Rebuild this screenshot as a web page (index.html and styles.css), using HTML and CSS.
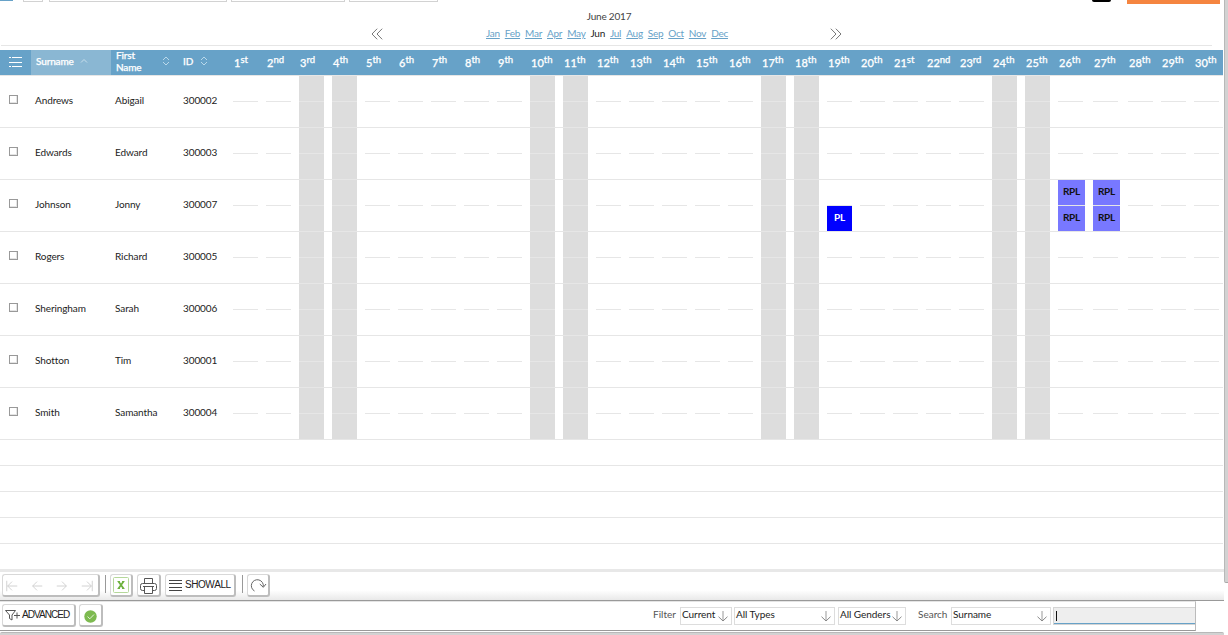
FILE: index.html
```html
<!DOCTYPE html>
<html lang="en">
<head>
<meta charset="utf-8">
<title>Absence planner</title>
<link rel="stylesheet" href="styles.css">
</head>
<body>
<div class="app">
  <div class="upper">
    <main class="main">
      <div class="tabs">
        <span class="tab-active"></span><span class="tab t1"></span><span class="tab t2"></span><span class="tab t3"></span><span class="tab t4"></span>
        <span class="pill"></span><span class="cta"></span>
      </div>
      <div class="calendar-nav">
        <svg class="chev" viewBox="0 0 12 12"><path d="M6.2 .7 1 6l5.200 5.300M11.200 .7 6 6l5.200 5.300"/></svg>
        <div class="period">
          <div class="period-title">June 2017</div>
          <nav class="months"><a>Jan</a><a>Feb</a><a>Mar</a><a>Apr</a><a>May</a><b>Jun</b><a>Jul</a><a>Aug</a><a>Sep</a><a>Oct</a><a>Nov</a><a>Dec</a></nav>
        </div>
        <svg class="chev" viewBox="0 0 12 12"><path d="M.8 .7 6 6 .8 11.300M5.800 .7 11 6l-5.200 5.300"/></svg>
      </div>
      <div class="rule"></div>
      <div class="grid-head" id="head">
        <div class="h-menu"><svg width="14" height="11" viewBox="0 0 14 11"><path d="M0 .5h2M3 .5h10M0 5.500h13M0 9.500h2M3 9.500h10"/></svg></div>
        <div class="h-surname">Surname<svg width="8" height="6" viewBox="0 0 8 6"><path d="M1 4.500 4 1.500 7 4.500"/></svg></div>
        <div class="h-first"><span>First<br>Name</span><svg width="8" height="10" viewBox="0 0 8 10"><path d="M1 4 4 1 7 4M1 6 4 9 7 6"/></svg></div>
        <div class="h-id">ID<svg width="8" height="10" viewBox="0 0 8 10"><path d="M1 4 4 1 7 4M1 6 4 9 7 6"/></svg></div>
      </div>
      <div id="rows"></div>
      <div class="blank"></div><div class="blank"></div><div class="blank"></div><div class="blank"></div><div class="blank last"></div>
    </main>
    <div class="vscroll"></div>
  </div>
  <div class="toolbar">
    <div class="btn pager">
      <svg viewBox="0 0 16 16"><path d="M2 2v12M14 8H3M8 3 3 8l5 5"/></svg>
      <svg viewBox="0 0 16 16"><path d="M14 8H3M8 3 3 8l5 5"/></svg>
      <svg viewBox="0 0 16 16"><path d="M2 8h11M8 3l5 5-5 5"/></svg>
      <svg viewBox="0 0 16 16"><path d="M14 2v12M2 8h11M8 3l5 5-5 5"/></svg>
    </div>
    <span class="sep first"></span>
    <div class="btn excel"><svg width="16" height="16" viewBox="0 0 16 16"><rect x=".5" y=".5" width="15" height="15" rx="1" fill="#fff" stroke="#b5d89a"/><path d="M5.500 4.500l5 7M10.500 4.500l-5 7" stroke="#6fb23f" stroke-width="1.800" fill="none"/><path d="M4.500 4.500h2.500M9 4.500h2.500M4.500 11.500h2.500M9 11.500h2.500" stroke="#6fb23f"/></svg></div>
    <div class="btn print"><svg width="17" height="16" viewBox="0 0 17 16"><path d="M4.500 5V.5h8V5M4.500 12.500h-2a2 2 0 0 1-2-2v-3a2 2 0 0 1 2-2h12a2 2 0 0 1 2 2v3a2 2 0 0 1-2 2h-2M3 8.500h11M4.500 8.500v7h8v-7" fill="none" stroke="#555"/></svg></div>
    <div class="btn showall"><svg width="13" height="11" viewBox="0 0 13 11"><path d="M0 .5h13M0 3.500h13M0 7.500h13M0 10.500h13" stroke="#444"/></svg><span>SHOW ALL</span></div>
    <span class="sep"></span>
    <div class="btn refresh"><svg width="17" height="15" viewBox="0 0 17 15"><path d="M4.500 13A6 6 0 1 1 13.300 8.500M9.800 6l3.500 3.300L16 6" fill="none" stroke="#666"/></svg></div>
  </div>
  <div class="filterbar">
    <div class="btn adv"><svg width="16" height="12" viewBox="0 0 16 12"><path d="M.5 1.500h10L7 6v5L4.500 9.500V6zM9 6.500h6M12 3.500v6" fill="none" stroke="#555"/></svg><span>ADVANCED</span></div>
    <div class="btn ok"><svg width="13" height="13" viewBox="0 0 13 13"><circle cx="6.500" cy="6.500" r="6.200" fill="#7dba50"/><path d="M3.500 6.600 5.800 8.800 10 4.500" fill="none" stroke="#e6f3dc"/></svg></div>
    <label class="lab-filter">Filter</label>
    <div class="select s1">Current<svg viewBox="0 0 10 11"><path d="M5 0v10"/><path class="tip" d="M.5 5.700 5 10l4.500-4.300"/></svg></div>
    <div class="select s2">All Types<svg viewBox="0 0 10 11"><path d="M5 0v10"/><path class="tip" d="M.5 5.700 5 10l4.500-4.300"/></svg></div>
    <div class="select s3">All Genders<svg viewBox="0 0 10 11"><path d="M5 0v10"/><path class="tip" d="M.5 5.700 5 10l4.500-4.300"/></svg></div>
    <label class="lab-search">Search</label>
    <div class="select s4">Surname<svg viewBox="0 0 10 11"><path d="M5 0v10"/><path class="tip" d="M.5 5.700 5 10l4.500-4.300"/></svg></div>
    <div class="search"><i></i></div>
  </div>
  <div class="hscroll"></div>
</div>
<script src="app.js"></script>
</body>
</html>
```
FILE: styles.css
```css
* { box-sizing: border-box; }
body { margin: 0; background: #fff; font-family: Lato, "Liberation Sans", sans-serif; font-size: 10px; color: #222; }
svg { display: block; flex: none; }
.app { width: 1228px; height: 635px; overflow: hidden; }
.upper { display: flex; height: 569px; }
.main { width: 1224px; }
.vscroll { width: 4px; height: 583px; background: #d2d2d2; border-left: 1px solid #b8b8b8; border-bottom: 1px solid #a8a8a8; border-radius: 0 0 0 2px; }

.tabs { display: flex; height: 4px; align-items: flex-start; }
.tab-active { width: 13px; height: 1px; background: #67a2c8; margin-right: 10px; }
.tab { height: 2px; border: 1px solid #d2d2d2; border-top: 0; }
.t1 { width: 20px; margin-right: 6px; }
.t2 { width: 178px; margin-right: 4px; }
.t3 { width: 114px; margin-right: 4px; }
.t4 { width: 89px; }
.pill { width: 19px; height: 2px; background: #000; border-radius: 0 0 4px 4px; margin-left: 654px; }
.cta { width: 93px; height: 4px; background: #f58540; margin-left: 16px; }

.calendar-nav { display: flex; height: 41px; padding-left: 371px; }
.chev { width: 12px; height: 12px; margin-top: 24px; fill: none; stroke: #777; }
.period { width: 447px; text-align: center; }
.period-title { margin-top: 6px; line-height: 13px; padding-left: 5px; letter-spacing: -.2px; color: #444; }
.months { display: flex; justify-content: center; gap: 5px; margin-top: 4px; line-height: 13px; padding-left: 1px; letter-spacing: -.27px; }
.months a { color: #67a2c8; text-decoration: underline; }
.months b { font-weight: 400; }
.rule { height: 1px; margin: 0 31px 4px 1px; background: #e6e6e6; width: 1211px; }

.grid-head, .row { display: grid; grid-template-columns: 31px 80px 68px 54px repeat(25, 33px) 35px 35px 33px 33px 29px; width: 1223px; }
.grid-head { height: 25px; background: #67a2c8; color: #fff; align-items: center; -webkit-text-stroke: .25px #fff; }
.grid-head svg { fill: none; stroke: #fff; }
.grid-head > div { display: flex; align-items: center; height: 25px; }
.h-menu { padding: 0 0 1px 9px; }
.h-surname { background: #8ab7d3; padding: 0 0 3px 5px; font-weight: 500; letter-spacing: -.15px; }
.grid-head .h-surname svg { margin-left: 6px; stroke: #c8dfec; }
.h-first { padding: 0 0 3px 5px; line-height: 12px; font-weight: 500; letter-spacing: -.15px; }
.h-first span { width: 46px; }
.h-first svg { margin-top: -1px; }
.h-id { padding: 0 0 3px 4px; font-weight: 500; }
.h-id svg { margin-left: 7px; }
.grid-head .h-first svg, .grid-head .h-id svg { stroke: #b9d8ea; }
.grid-head > .day { padding-left: 1px; display: block; line-height: 26px; font-size: 11px; font-weight: 500; white-space: nowrap; }
.day sup { font-size: 9.500px; line-height: 0; vertical-align: 4px; }

.row { height: 52px; border-top: 1px solid #e6e6e6; }
.row > .text { line-height: 48px; padding-left: 4px; letter-spacing: -.1px; }
.box { width: 9px; height: 9px; border: 1px solid #999; margin: 19px 0 0 9px; box-shadow: inset -1px -1px #e4e4e4; }
.slot { width: 25px; display: grid; grid-template-rows: 25px 25px; row-gap: 1px; background: linear-gradient(#e6e6e6, #e6e6e6) 0 25px / 100% 1px no-repeat; }
.slot.weekend { background-color: #ddd; }
.slot.wide { width: 27px; }
.slot span { text-align: center; line-height: 23px; font-weight: 700; letter-spacing: -.2px; }
.pl { background: #00f; color: #fff; }
.rpl { background: #7878ff; color: #111; }
.blank { width: 1223px; height: 26px; border-top: 1px solid #e6e6e6; }

.toolbar { height: 32px; width: 1224px; border-top: 3px solid #e8e8e8; border-bottom: 1px solid #999; background: linear-gradient(#fff 65%, #e9e9e9); display: flex; align-items: flex-start; padding: 2px 0 0 2px; }
.btn { height: 23px; background: #fff; border: 1px solid #d8d8d8; border-right: 2px solid #bdbdbd; border-bottom: 2px solid #bdbdbd; border-radius: 3px; display: flex; align-items: center; font-family: "Liberation Sans", Arial, sans-serif; font-size: 10px; white-space: nowrap; color: #222; }
.pager { width: 98px; padding: 2px 4px 0 2px; justify-content: space-between; }
.pager svg { width: 14px; height: 14px; fill: none; stroke: #ccc; }
.sep { width: 1px; height: 18px; background: #999; margin-top: 1px; }
.sep.first { margin-left: 5px; }
.excel { margin-left: 4px; width: 23px; padding-left: 2px; }
.print { margin-left: 4px; width: 24px; padding: 1px 0 0 2px; }
.showall { margin: 0 6px 0 4px; width: 71px; padding-left: 3px; gap: 3px; letter-spacing: -.5px; word-spacing: -1.500px; }
.showall span { margin-top: -1px; }
.refresh { margin-left: 4px; width: 23px; padding-left: 2px; }

.filterbar { height: 30px; width: 1196px; border-right: 1px solid #bbb; border-bottom: 1px solid #999; border-top: 1px solid #e4e4e4; display: flex; padding: 2px 0 0 2px; }
.adv { width: 74px; padding-left: 2px; gap: 1px; letter-spacing: -.95px; }
.adv span { margin-top: -1px; }
.ok { margin-left: 3px; width: 24px; padding: 2px 0 0 4px; }
.filterbar label { line-height: 21px; color: #555; }
.lab-filter { margin-left: 550px; width: 27px; }
.lab-search { margin-left: 12px; width: 33px; }
.select { height: 18px; margin-top: 3px; border: 1px solid #ddd; display: flex; justify-content: space-between; padding: 0 3px 0 1px; line-height: 12px; white-space: nowrap; letter-spacing: -.05px; }
.select svg { width: 10px; height: 11px; margin-top: 3px; fill: none; stroke: #bbb; stroke-width: 1.500; }
.select .tip { stroke: #888; stroke-width: 1; }
.s1 { width: 52px; }
.s2 { width: 101px; margin-left: 2px; }
.s3 { width: 68px; margin-left: 3px; }
.s4 { width: 100px; }
.search { flex: 1; height: 18px; margin: 3px 0 0 2px; background: #eee; border: 1px solid #d4d4d4; border-right: 0; box-shadow: inset 0 -1px #67a2c8; padding: 3px 0 0 2px; }
.search i { display: block; width: 1px; height: 10px; background: #111; }
.hscroll { height: 4px; width: 1224px; margin-top: 1px; background: #d2d2d2; border-top: 1px solid #b8b8b8; border-radius: 2px 2px 0 0; }
```
FILE: app.js
```js
const people = [
  ['Andrews', 'Abigail', '300002'],
  ['Edwards', 'Edward', '300003'],
  ['Johnson', 'Jonny', '300007'],
  ['Rogers', 'Richard', '300005'],
  ['Sheringham', 'Sarah', '300006'],
  ['Shotton', 'Tim', '300001'],
  ['Smith', 'Samantha', '300004']
];
const weekends = [3, 4, 10, 11, 17, 18, 24, 25];
const leave = {
  '300007': {
    19: '<span></span><span class="pl">PL</span>',
    26: '<span class="rpl">RPL</span><span class="rpl">RPL</span>',
    27: '<span class="rpl">RPL</span><span class="rpl">RPL</span>'
  }
};
const suffix = d => (d > 3 && d < 21) ? 'th' : ({ 1: 'st', 2: 'nd', 3: 'rd' }[d % 10] || 'th');

let days = '';
for (let d = 1; d <= 30; d++) days += `<div class="day">${d}<sup>${suffix(d)}</sup></div>`;
document.getElementById('head').insertAdjacentHTML('beforeend', days);

document.getElementById('rows').innerHTML = people.map(p => {
  let slots = '';
  for (let d = 1; d <= 30; d++) {
    const entry = (leave[p[2]] || {})[d] || '';
    const cls = 'slot' + (weekends.includes(d) ? ' weekend' : '') + (entry && d > 25 ? ' wide' : '');
    slots += `<div class="${cls}">${entry}</div>`;
  }
  return `<div class="row"><div class="box"></div>${p.map(t => `<div class="text">${t}</div>`).join('')}${slots}</div>`;
}).join('');
```
